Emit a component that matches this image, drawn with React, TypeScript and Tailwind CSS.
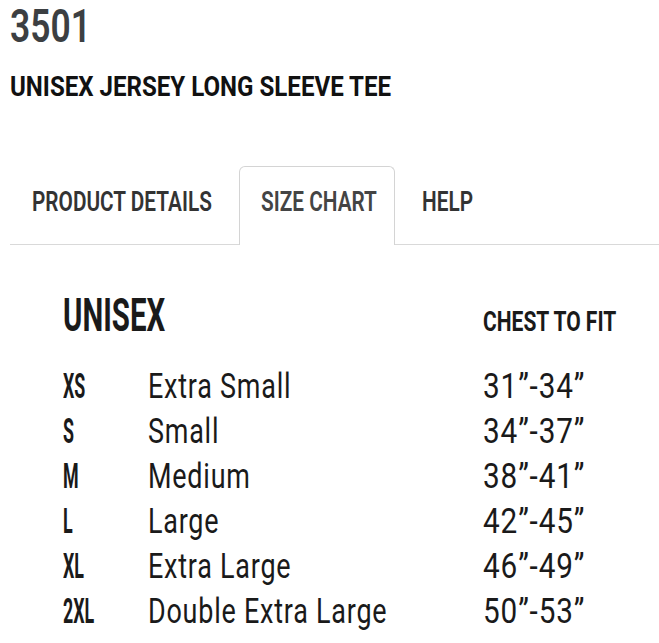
const rows = [
  { code: "XS", name: "Extra Small", chest: "31”-34”" },
  { code: "S", name: "Small", chest: "34”-37”" },
  { code: "M", name: "Medium", chest: "38”-41”" },
  { code: "L", name: "Large", chest: "42”-45”" },
  { code: "XL", name: "Extra Large", chest: "46”-49”" },
  { code: "2XL", name: "Double Extra Large", chest: "50”-53”" },
];

const tabs = [
  { label: "PRODUCT DETAILS", w: "w-[224px]" },
  { label: "SIZE CHART", w: "w-[156px]" },
  { label: "HELP", w: "w-[100px]" },
];

export default function App() {
  const active = 1;

  return (
    <div className="w-[659px] h-[643px] overflow-hidden bg-white pl-[10px] font-['Roboto',sans-serif]">
      <h1 className="mt-[4px] text-[46px] leading-[45px] font-semibold text-[#3c3f42]">
        <span className="inline-block origin-left scale-x-[0.77]">3501</span>
      </h1>
      <h2 className="mt-[25px] text-[28px] leading-[26px] font-bold text-[#111] whitespace-nowrap">
        <span className="inline-block origin-left scale-x-[0.86]">UNISEX JERSEY LONG SLEEVE TEE</span>
      </h2>

      {/* tabs */}
      <div className="mt-[66px] flex gap-[5px] border-b border-[#d9d9d9]">
        {tabs.map((t, i) => (
          <div
            key={t.label}
            className={
              `${t.w} h-[78px] pl-[21px] pt-[23px] border border-b-0 rounded-t-[6px] text-[27px] leading-[24px] font-semibold whitespace-nowrap ` +
              (i === active
                ? "border-[#d4d4d4] bg-white -mb-px h-[79px] text-[#444]"
                : "border-transparent text-[#333]")
            }
          >
            <span className="inline-block origin-left scale-x-[0.77]">{t.label}</span>
          </div>
        ))}
      </div>

      {/* size chart */}
      <div className="pl-[53px] mt-[47px] text-[#1a1a1a] whitespace-nowrap">
        <div className="flex items-baseline h-[72px]">
          <div className="w-[420px] shrink-0">
            <span className="inline-block text-[46px] leading-[46px] font-bold origin-left scale-x-[0.64]">
              UNISEX
            </span>
          </div>
          <span className="inline-block text-[28px] leading-[28px] font-bold origin-left scale-x-[0.75]">
            CHEST TO FIT
          </span>
        </div>
        {rows.map((r) => (
          <div key={r.code} className="flex h-[45px] text-[35px] leading-[45px]">
            <div className="w-[85px] shrink-0 font-bold">
              <span className="inline-block origin-left scale-x-[0.51]">{r.code}</span>
            </div>
            <div className="w-[335px] shrink-0 tracking-[1px]">
              <span className="inline-block origin-left scale-x-[0.77]">{r.name}</span>
            </div>
            <div className="tracking-[1px]">
              <span className="inline-block origin-left scale-x-[0.85]">{r.chest}</span>
            </div>
          </div>
        ))}
      </div>
    </div>
  );
}
